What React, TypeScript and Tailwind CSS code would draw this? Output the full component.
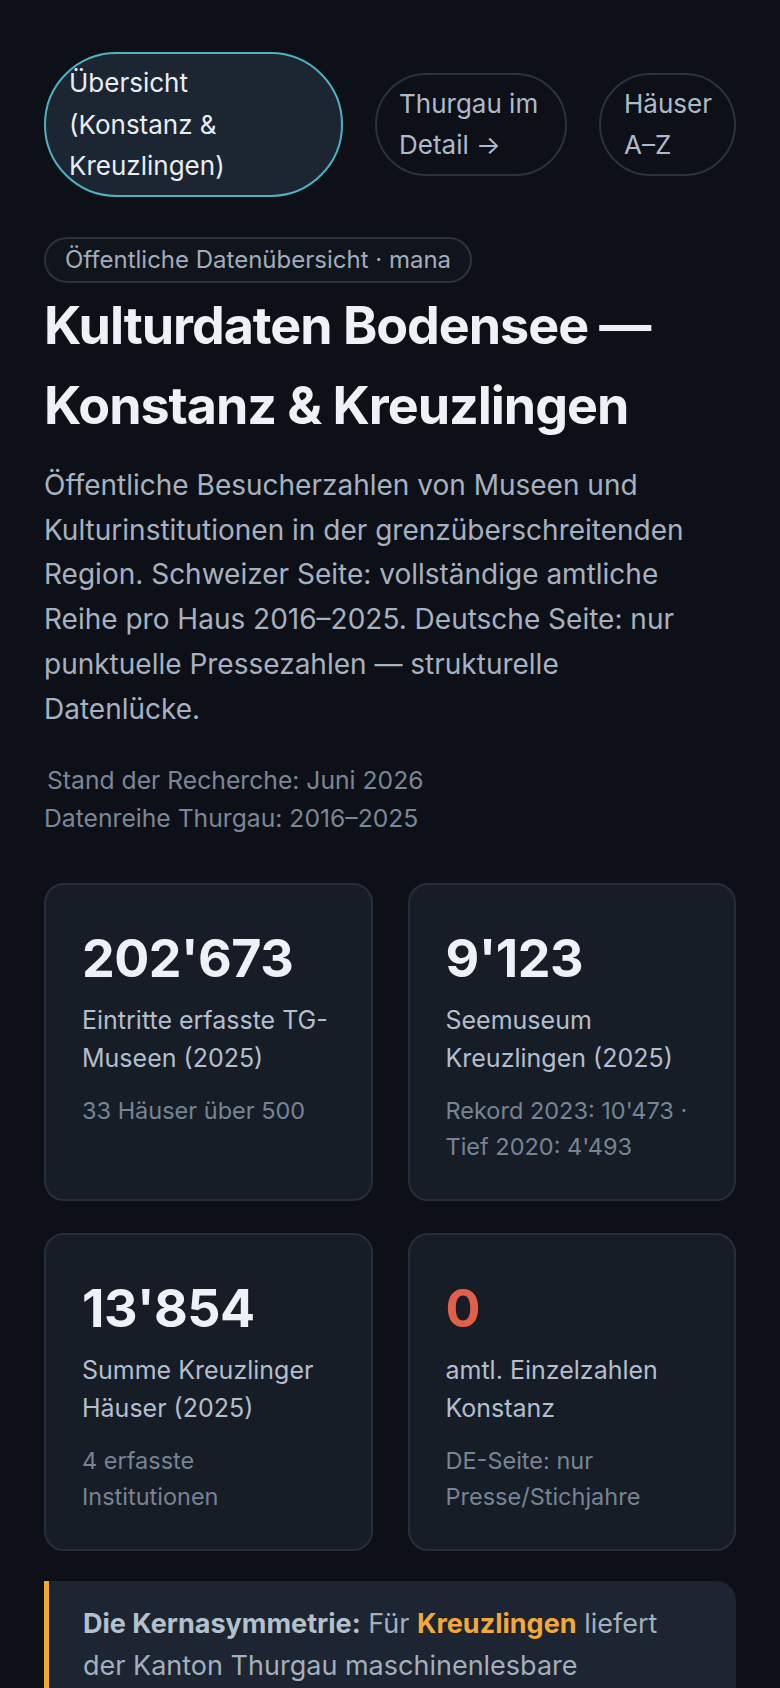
import React from "react";

type Stat = {
  value: string;
  label: string;
  note: string;
  accent?: boolean;
};

const stats: Stat[] = [
  { value: "202'673", label: "Eintritte erfasste TG-Museen (2025)", note: "33 Häuser über 500" },
  { value: "9'123", label: "Seemuseum Kreuzlingen (2025)", note: "Rekord 2023: 10'473 ·\nTief 2020: 4'493" },
  { value: "13'854", label: "Summe Kreuzlinger Häuser (2025)", note: "4 erfasste\nInstitutionen" },
  { value: "0", label: "amtl. Einzelzahlen Konstanz", note: "DE-Seite: nur\nPresse/Stichjahre", accent: true },
];

const StatCard = ({ value, label, note, accent }: Stat) => (
  <div className="rounded-[20px] border-2 border-[#252e3a] bg-[#161d27] px-[36px] pt-[36px] pb-[34px]">
    <div
      className={`text-[52px] font-bold leading-[76px] tracking-[-0.01em] ${
        accent ? "text-[#e2604b]" : "text-[#eef2f7]"
      }`}
    >
      {value}
    </div>
    <p className="mt-[4px] text-[25px] leading-[38px] text-[#b3bece]">{label}</p>
    <p className="mt-[16px] whitespace-pre-line text-[23.5px] leading-[36px] text-[#778494]">{note}</p>
  </div>
);

export default function App() {
  return (
    <div className="min-h-screen bg-[#0d1117] px-[44px] pt-[52px] pb-16 font-['Inter','Noto_Sans',sans-serif]">
      <nav className="flex items-center gap-[32px]">
        <a className="w-[299px] shrink-0 rounded-full border-2 border-[#4eb1c4] bg-[#1c2532] px-[23px] py-[8px] text-[26px] leading-[41.6px] text-[#e8edf3]">
          Übersicht (Konstanz &amp; Kreuzlingen)
        </a>
        <a className="w-[192px] shrink-0 rounded-full border-2 border-[#29323e] px-[22px] py-[8px] text-[26px] leading-[41.6px] text-[#aebacb]">
          Thurgau im Detail →
        </a>
        <a className="w-[137px] shrink-0 rounded-full border-2 border-[#29323e] px-[23px] py-[8px] text-[26px] leading-[41.6px] text-[#aebacb]">
          Häuser A–Z
        </a>
      </nav>

      <header className="mt-[40px]">
        <span className="inline-block rounded-full border-2 border-[#29323e] bg-[#10151c] px-[19px] py-[3px] text-[24px] leading-[36px] text-[#a2adbb]">
          Öffentliche Datenübersicht · mana
        </span>
        <h1 className="mt-[3px] text-[52px] font-bold leading-[80px] tracking-[-0.02em] text-[#eef2f7]">
          Kulturdaten Bodensee — Konstanz &amp; Kreuzlingen
        </h1>
        <p className="mt-[17px] max-w-[672px] text-[28px] leading-[44.8px] text-[#a6b2c1]">
          Öffentliche Besucherzahlen von Museen und Kulturinstitutionen in der
          grenzüberschreitenden Region. Schweizer Seite: vollständige amtliche
          Reihe pro Haus 2016–2025. Deutsche Seite: nur punktuelle Pressezahlen —
          strukturelle Datenlücke.
        </p>
        <div className="mt-[29px] text-[24.7px] leading-[38px] text-[#7a8797]">
          <div className="ml-[3px]">Stand der Recherche: Juni 2026</div>
          <div>Datenreihe Thurgau: 2016–2025</div>
        </div>
      </header>

      <section className="mt-[46px] grid grid-cols-2 gap-x-[35px] gap-y-[32px]">
        {stats.map((s) => (
          <StatCard key={s.value} {...s} />
        ))}
      </section>

      <div className="mt-[30px] rounded-r-[20px] border-l-[5px] border-[#f2a93b] bg-[#1c2531] pt-[22px] pr-[56px] pb-[30px] pl-[34px] text-[27px] leading-[42px] text-[#a3afbd]">
        <strong className="font-bold text-[#b5c0cd]">Die Kernasymmetrie:</strong> Für{" "}
        <strong className="font-bold text-[#f2a93b]">Kreuzlingen</strong> liefert der
        Kanton Thurgau maschinenlesbare Besucherzahlen pro Haus und Jahr. Für{" "}
        <strong className="font-bold text-[#b5c0cd]">Konstanz</strong> gibt es keine
        vergleichbare amtliche Reihe — nur einzelne Pressemeldungen.
      </div>
    </div>
  );
}
